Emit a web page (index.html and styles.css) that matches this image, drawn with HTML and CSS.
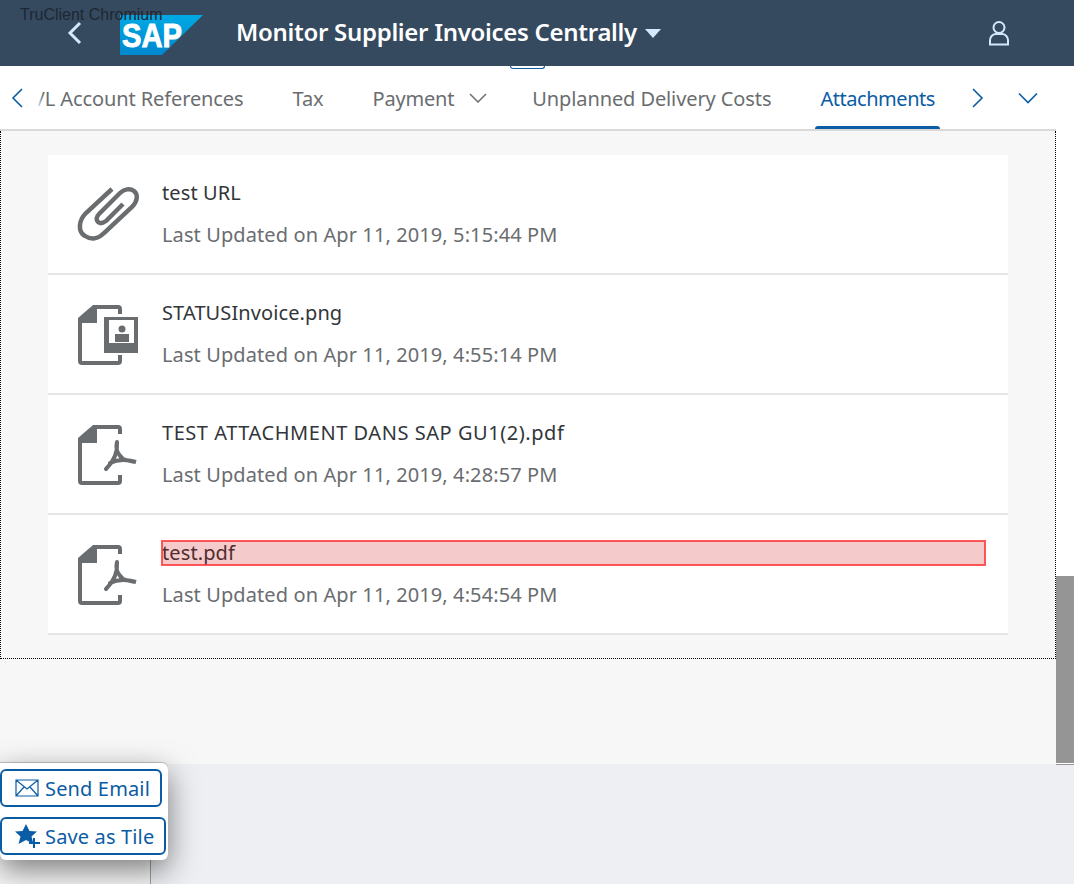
FILE: index.html
```html
<!DOCTYPE html>
<html>

<head>
  <title>Monitor Supplier Invoices Centrally</title>
  <meta name="viewport" content="width=device-width, initial-scale=1.0">
  <link rel="stylesheet" href="styles.css">
</head>

<body>
  <div class="page">
    <div class="runner">TruClient Chromium</div>

    <header class="shell">
      <svg class="shell-back" width="16" height="24" viewBox="0 0 16 24"><path d="M13 2 L3 12 L13 22" /></svg>
      <svg class="logo" width="84" height="41" viewBox="0 0 84 41">
        <defs>
          <linearGradient id="sapBlue" x1="0" y1="0" x2="0" y2="1">
            <stop offset="0" stop-color="#00a9e4" />
            <stop offset="1" stop-color="#0088cf" />
          </linearGradient>
        </defs>
        <polygon points="0,0 83,0 42,40 0,40" fill="url(#sapBlue)" />
        <text x="2" y="32" class="logo-text" textLength="60" lengthAdjust="spacingAndGlyphs">SAP</text>
      </svg>
      <h1 class="shell-title">Monitor Supplier Invoices Centrally</h1>
      <span class="shell-caret"></span>
      <svg class="shell-user" width="20" height="26" viewBox="0 0 20 26">
        <circle cx="10" cy="7.5" r="5.5" />
        <path d="M1 24.5 V20 C1 16.5 4 14 7 14 H13 C16 14 19 16.5 19 20 V24.5 Z" />
      </svg>
    </header>

    <div class="stage">
      <main class="main">
        <nav class="tabs">
          <span class="tab-sliver"></span>
          <button class="tab-arrow tab-prev"><svg width="14" height="22" viewBox="0 0 14 22"><path d="M11 2 L2 11 L11 20" /></svg></button>
          <div class="tab-strip">
            <a class="tab">/L Account References</a>
            <a class="tab">Tax</a>
            <a class="tab tab-menu">Payment<svg class="tab-chevron" width="18" height="10" viewBox="0 0 18 10"><path d="M1 1 L9 9 L17 1" /></svg></a>
            <a class="tab">Unplanned Delivery Costs</a>
            <a class="tab tab-selected">Attachments</a>
          </div>
          <button class="tab-arrow tab-next"><svg width="14" height="22" viewBox="0 0 14 22"><path d="M3 2 L12 11 L3 20" /></svg></button>
          <button class="tab-arrow tab-more"><svg width="20" height="12" viewBox="0 0 20 12"><path d="M1 1.5 L10 10.5 L19 1.5" /></svg></button>
        </nav>

        <section class="content">
          <ul class="files">
            <li class="file">
              <svg class="file-icon" width="64" height="64" viewBox="0 0 64 64">
                <path class="line clip" d="M36 6 L10 30 C2 38 2 49 9 53 C15 57 22 56 28 50 L56 24 C62 18 62 11 58 8 C54 5 48 6 44 10 L23 31 C20 34 20 37 22 39 C24 41 27 40 30 38 L47 21" />
              </svg>
              <div class="file-text">
                <div class="file-name">test URL</div>
                <div class="file-date">Last Updated on Apr 11, 2019, 5:15:44 PM</div>
              </div>
            </li>
            <li class="file">
              <svg class="file-icon" width="64" height="64" viewBox="0 0 64 64">
                <path class="line" d="M44 11 V6 A2 2 0 0 0 42 4 H18 M4 18 V58 A2 2 0 0 0 6 60 H42 A2 2 0 0 0 44 58 V52" />
                <path class="solid" d="M2 15 L17 2 H21 V20 H2 Z" />
                <path class="solid" fill-rule="evenodd" d="M28 14 H62 V50 H28 Z M33 17 V40 H58 V17 Z" />
                <circle class="solid" cx="46" cy="26" r="3.5" />
                <rect class="solid" x="39" y="31" width="14" height="8" />
              </svg>
              <div class="file-text">
                <div class="file-name">STATUSInvoice.png</div>
                <div class="file-date">Last Updated on Apr 11, 2019, 4:55:14 PM</div>
              </div>
            </li>
            <li class="file">
              <svg class="file-icon" width="64" height="64" viewBox="0 0 64 64">
                <path class="line" d="M44 11 V6 A2 2 0 0 0 42 4 H18 M4 18 V58 A2 2 0 0 0 6 60 H42 A2 2 0 0 0 44 58 V52" />
                <path class="solid" d="M2 15 L17 2 H21 V20 H2 Z" />
                <path class="line pdf" d="M41 19 C39 28 43 32 47 36 C51 38 56 38 60 39 C50 36 42 36 34 40 M41 19 C42 30 36 40 30 46" />
              </svg>
              <div class="file-text">
                <div class="file-name file-name-caps">TEST ATTACHMENT DANS SAP GU1(2).pdf</div>
                <div class="file-date">Last Updated on Apr 11, 2019, 4:28:57 PM</div>
              </div>
            </li>
            <li class="file">
              <svg class="file-icon" width="64" height="64" viewBox="0 0 64 64">
                <path class="line" d="M44 11 V6 A2 2 0 0 0 42 4 H18 M4 18 V58 A2 2 0 0 0 6 60 H42 A2 2 0 0 0 44 58 V52" />
                <path class="solid" d="M2 15 L17 2 H21 V20 H2 Z" />
                <path class="line pdf" d="M41 19 C39 28 43 32 47 36 C51 38 56 38 60 39 C50 36 42 36 34 40 M41 19 C42 30 36 40 30 46" />
              </svg>
              <div class="file-text">
                <div class="file-name file-name-hit">test.pdf</div>
                <div class="file-date">Last Updated on Apr 11, 2019, 4:54:54 PM</div>
              </div>
            </li>
          </ul>
        </section>
      </main>

      <div class="scroll"><div class="scroll-thumb"></div></div>
    </div>

    <footer class="bottom">
      <div class="bottom-side"></div>
    </footer>

    <div class="share">
      <button class="share-btn">
        <svg width="24" height="18" viewBox="0 0 24 18"><path class="env" d="M1 1 H23 V17 H1 Z M1 1 L12 10 L23 1 M1 17 L9 8 M23 17 L15 8" /></svg>
        Send Email
      </button>
      <button class="share-btn">
        <svg class="share-star" width="26" height="24" viewBox="0 0 26 24">
          <polygon class="star" points="11,0 14.5,7 22,7.5 16.5,12.5 18.5,20 11,16 3.5,20 5.5,12.5 0,7.5 7.5,7" />
          <path class="plus" d="M19 14 V24 M14 19 H25" />
        </svg>
        Save as Tile
      </button>
    </div>
  </div>
</body>

</html>
```

FILE: styles.css
```css
body {
  font-family: "Noto Sans", Arial, sans-serif;
  font-size: 20px;
  margin: 0;
  padding: 0;
  color: #32363a;
  overflow: hidden;
}

.page {
  position: relative;
  width: 1074px;
  height: 884px;
  display: flex;
  flex-direction: column;
  overflow: hidden;
}

.runner {
  position: absolute;
  left: 20px;
  top: 6px;
  font-family: "Liberation Sans", Arial, sans-serif;
  font-size: 16px;
  line-height: 18px;
  color: #1d2733;
  z-index: 5;
}

/* shell header */
.shell {
  height: 66px;
  flex: none;
  background: #354a5f;
  display: flex;
  align-items: center;
}

.shell-back {
  margin-left: 67px;
}

.shell-back path {
  fill: none;
  stroke: #d1e8ff;
  stroke-width: 3;
}

.logo {
  margin-left: 37px;
  margin-top: 4px;
}

.logo-text {
  font-family: "Liberation Sans", Arial, sans-serif;
  font-weight: bold;
  font-size: 33px;
  fill: #fff;
  stroke: #fff;
  stroke-width: 0.9;
}

.shell-title {
  margin: 0 0 3px 32px;
  font-size: 24px;
  font-weight: 600;
  letter-spacing: -0.3px;
  color: #fff;
  white-space: nowrap;
}

.shell-caret {
  margin-left: 8px;
  width: 0;
  height: 0;
  border-left: 8px solid transparent;
  border-right: 8px solid transparent;
  border-top: 9px solid #d1e8ff;
}

.shell-user {
  margin-left: auto;
  margin-right: 65px;
}

.shell-user circle,
.shell-user path {
  fill: none;
  stroke: #d1e8ff;
  stroke-width: 2;
}

/* main area */
.stage {
  flex: 1;
  display: flex;
  min-height: 0;
}

.main {
  width: 1056px;
  display: flex;
  flex-direction: column;
  background: #f7f7f7;
}

.scroll {
  flex: 1;
  background: #fff;
}

.scroll-thumb {
  margin-top: 510px;
  height: 187px;
  background: #959595;
}

/* tabs */
.tabs {
  position: relative;
  height: 65px;
  box-sizing: border-box;
  flex: none;
  display: flex;
  align-items: stretch;
  background: #fff;
  border-bottom: 2px solid #d9d9d9;
}

.tab-sliver {
  position: absolute;
  left: 510px;
  top: 0;
  width: 35px;
  height: 3px;
  box-sizing: border-box;
  border: 1px solid #0a5ca5;
  border-top: 0;
  border-radius: 0 0 3px 3px;
}

.tab-arrow {
  border: 0;
  padding: 0;
  background: none;
  display: flex;
  align-items: center;
  justify-content: center;
}

.tab-arrow path {
  fill: none;
  stroke: #0a5ca5;
  stroke-width: 1.6;
}

.tab-prev {
  width: 37px;
  justify-content: flex-start;
  padding-left: 11px;
  box-sizing: border-box;
}

.tab-next {
  width: 38px;
}

.tab-more {
  width: 40px;
  margin-left: 12px;
}

.tab-strip {
  position: relative;
  width: 921px;
  display: flex;
  justify-content: flex-end;
  gap: 39px;
  overflow: hidden;
  padding-right: 18px;
  box-sizing: border-box;
}

.tab-strip::before {
  content: "";
  position: absolute;
  left: 0;
  top: 0;
  bottom: 0;
  width: 6px;
  background: linear-gradient(to right, #fff, rgba(255, 255, 255, 0));
  z-index: 1;
}

.tab {
  flex: none;
  padding: 1px 5px 0;
  display: flex;
  align-items: center;
  gap: 17px;
  color: #6a6d70;
  letter-spacing: -0.1px;
  white-space: nowrap;
  position: relative;
}

.tab-menu {
  gap: 15px;
  letter-spacing: -0.2px;
}

.tab-chevron {
  margin-right: -4px;
}

.tab-chevron path {
  fill: none;
  stroke: #6a6d70;
  stroke-width: 1.5;
}

.tab-selected {
  color: #0a5ca5;
  letter-spacing: -0.45px;
}

.tab-selected::after {
  content: "";
  position: absolute;
  left: 0;
  right: 0;
  bottom: -2px;
  height: 5px;
  background: #0a5ca5;
  border-radius: 3px 3px 0 0;
}

/* attachments */
.content {
  height: 528px;
  flex: none;
  box-sizing: border-box;
  padding: 24px 47px 0;
  border: 1px dotted #000;
  border-top: 0;
}

.files {
  list-style: none;
  margin: 0;
  padding: 0;
  background: #fff;
}

.file {
  height: 120px;
  box-sizing: border-box;
  display: flex;
  padding: 28px 23px 0 28px;
  border-bottom: 2px solid #e5e5e5;
  gap: 22px;
}

.file-icon {
  flex: none;
}

.file-icon .line {
  fill: none;
  stroke: #6a6d70;
  stroke-width: 4;
}

.file-icon .clip {
  stroke-width: 4.5;
}

.file-icon .pdf {
  stroke-width: 4;
  stroke-linecap: round;
}

.file-icon .solid {
  fill: #6a6d70;
}

.file-text {
  flex: 1;
  margin-top: -2px;
}

.file-name {
  line-height: 24px;
  letter-spacing: 0.1px;
}

.file-name-caps {
  letter-spacing: 0.55px;
}

.file-name-hit {
  background: rgba(220, 90, 90, 0.32);
  outline: 2px solid rgba(255, 60, 60, 0.85);
  outline-offset: -1px;
  color: #512c2f;
}

.file-date {
  margin-top: 18px;
  line-height: 24px;
  letter-spacing: 0.1px;
  color: #6a6d70;
}

/* bottom */
.bottom {
  position: relative;
  height: 120px;
  flex: none;
  background: #edeff2;
  display: flex;
}

.bottom::after {
  content: "";
  position: absolute;
  right: 0;
  top: 0;
  width: 18px;
  height: 1px;
  background: #959595;
}

.bottom-side {
  width: 150px;
  background: #f7f7f7;
  border-right: 1px solid #a0a0a0;
}

.share {
  position: absolute;
  left: 0;
  top: 763px;
  width: 168px;
  height: 97px;
  box-sizing: border-box;
  padding-top: 6px;
  display: flex;
  flex-direction: column;
  align-items: flex-start;
  gap: 10px;
  background: #fff;
  border-radius: 0 6px 6px 6px;
  box-shadow: 0 10px 30px rgba(0, 0, 0, 0.5), 0 -1px 0 rgba(0, 0, 0, 0.2);
}

.share-btn {
  height: 38px;
  box-sizing: border-box;
  display: flex;
  align-items: center;
  gap: 6px;
  padding: 0 10px 0 13px;
  background: #fff;
  border: 2px solid #0a5ca5;
  border-radius: 6px;
  color: #0a5ca5;
  font-family: inherit;
  font-size: 20px;
  letter-spacing: 0.15px;
  white-space: nowrap;
}

.share-star {
  margin-right: -2px;
}

.share-btn .env {
  fill: none;
  stroke: #0a5ca5;
  stroke-width: 1.2;
}

.share-btn .plus {
  fill: none;
  stroke: #0a5ca5;
  stroke-width: 2;
}

.share-btn .star {
  fill: #0a5ca5;
}
```
